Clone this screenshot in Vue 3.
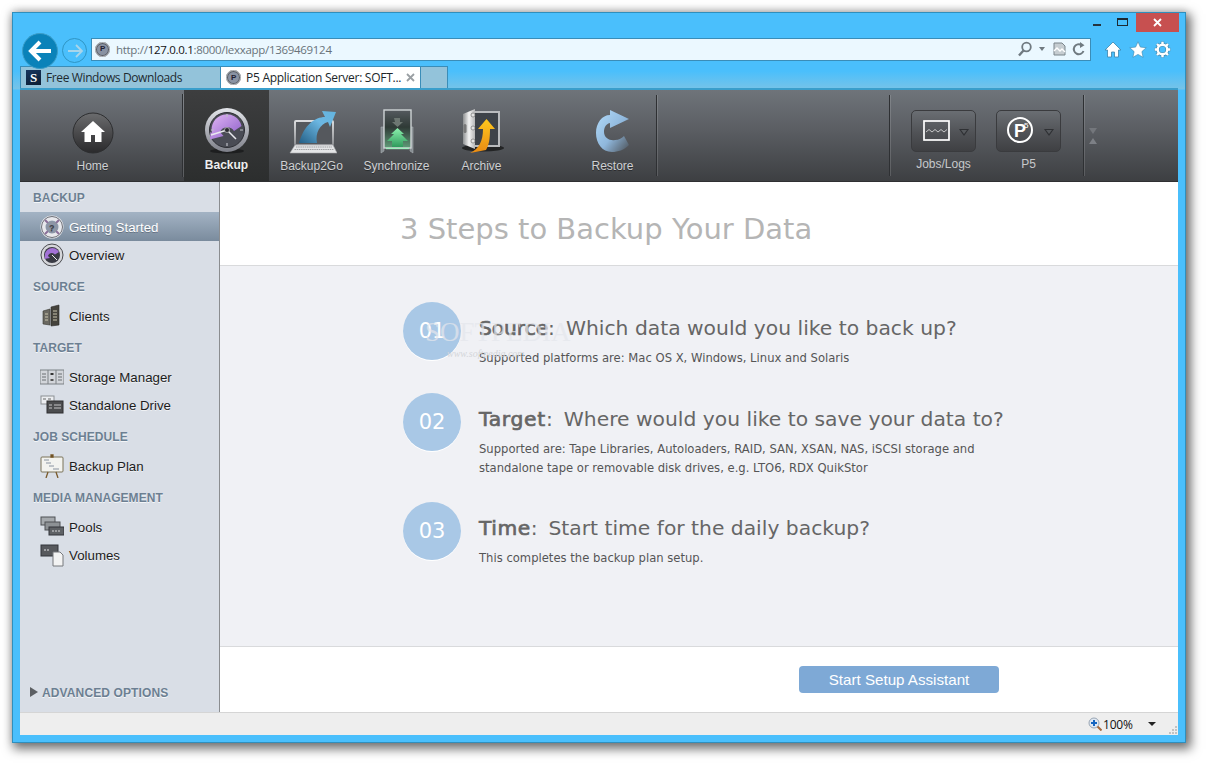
<script setup>
const sections = [
  { title: 'BACKUP', items: [
    { label: 'Getting Started', icon: 'help', active: true },
    { label: 'Overview', icon: 'clock' }
  ] },
  { title: 'SOURCE', items: [{ label: 'Clients', icon: 'clients' }] },
  { title: 'TARGET', items: [
    { label: 'Storage Manager', icon: 'storage' },
    { label: 'Standalone Drive', icon: 'drive' }
  ] },
  { title: 'JOB SCHEDULE', items: [{ label: 'Backup Plan', icon: 'plan' }] },
  { title: 'MEDIA MANAGEMENT', items: [
    { label: 'Pools', icon: 'pools' },
    { label: 'Volumes', icon: 'volumes' }
  ] }
]
const steps = [
  { n: '01', head: 'Source', track: -0.1, q: 'Which data would you like to back up?', lines: ['Supported platforms are: Mac OS X, Windows, Linux and Solaris'] },
  { n: '02', head: 'Target', track: 0.7, q: 'Where would you like to save your data to?', lines: ['Supported are: Tape Libraries, Autoloaders, RAID, SAN, XSAN, NAS, iSCSI storage and', 'standalone tape or removable disk drives, e.g. LTO6, RDX QuikStor'] },
  { n: '03', head: 'Time', track: 0.5, q: 'Start time for the daily backup?', lines: ['This completes the backup plan setup.'] }
]
</script>

<template>
  <div class="page">
    <div class="window">
      <div class="caption">
        <span class="min"></span>
        <span class="max"></span>
        <span class="close">
          <svg width="11" height="11" viewBox="0 0 11 11"><path d="M2 2l7 7M9 2l-7 7" stroke="#fff" stroke-width="1.8"/></svg>
        </span>
      </div>

      <div class="navrow">
        <div class="back">
          <svg width="26" height="24" viewBox="0 0 26 24"><path d="M13 3L4 12l9 9M4.500 12H24" fill="none" stroke="#fff" stroke-width="4"/></svg>
        </div>
        <div class="forward">
          <svg width="18" height="16" viewBox="0 0 18 16"><path d="M10 2l6 6-6 6M15.500 8H2" fill="none" stroke="#a9d5ea" stroke-width="1.800"/></svg>
        </div>
        <div class="address">
          <span class="p5fav small"><i>P</i></span>
          <span class="url">http://<b>127.0.0.1</b>:8000/lexxapp/1369469124</span>
          <span class="addr-tools">
            <svg width="16" height="16" viewBox="0 0 16 16"><circle cx="9.500" cy="6" r="4.300" fill="none" stroke="#707a80" stroke-width="1.800"/><path d="M6.500 9.500L2 14.500" stroke="#707a80" stroke-width="2.400"/></svg>
            <i class="addr-caret"></i>
            <svg class="compat" width="13" height="14" viewBox="0 0 13 14"><path d="M1 1h8l3 3v9H1z" fill="#c6cdd1" stroke="#7b858b"/><path d="M1 9l3-3 3 3 2-2 3 3" fill="none" stroke="#fff" stroke-width="1.400"/></svg>
            <svg width="14" height="14" viewBox="0 0 14 14"><path d="M11.500 9A5 5 0 1 1 9.500 3" fill="none" stroke="#707a80" stroke-width="2"/><path d="M8 0l4.500 3.200L8 6z" fill="#707a80"/></svg>
          </span>
        </div>
        <div class="ie-tools">
          <svg width="18" height="17" viewBox="0 0 18 17"><path d="M9 1L1 9h2.500v7h4v-5h3v5h4V9H17z" fill="#fff" stroke="#3b84ab" stroke-width=".8"/></svg>
          <svg width="18" height="17" viewBox="0 0 18 17"><path d="M9 .8l2.400 5.300 5.800.6-4.300 3.900 1.200 5.700L9 13.400l-5.100 2.900 1.200-5.700L.8 6.700l5.800-.6z" fill="#fff" stroke="#3b84ab" stroke-width=".6"/></svg>
          <svg width="17" height="17" viewBox="0 0 17 17"><path d="M8.500 .6v3M8.500 13.400v3M.6 8.500h3M13.400 8.500h3M2.900 2.900L5 5M12 12l2.100 2.100M14.100 2.900L12 5M5 12l-2.100 2.100" stroke="#3b84ab" stroke-width="3.600"/><circle cx="8.500" cy="8.500" r="4.800" fill="none" stroke="#3b84ab" stroke-width="3.600"/><circle cx="8.500" cy="8.500" r="4.800" fill="none" stroke="#fff" stroke-width="2.400"/><path d="M8.500 .8v3M8.500 13.200v3M.8 8.500h3M13.200 8.500h3M3 3l2 2M12 12l2 2M14 3l-2 2M5 12l-2 2" stroke="#fff" stroke-width="2.400"/></svg>
        </div>
      </div>

      <div class="tabs">
        <div class="tab inactive">
          <span class="s-fav">S</span>
          <span class="tab-text">Free Windows Downloads</span>
        </div>
        <div class="tab current">
          <span class="p5fav"><i>P</i></span>
          <span class="tab-text">P5 Application Server: SOFT...</span>
          <svg class="tab-x" width="9" height="9" viewBox="0 0 9 9"><path d="M1 1l7 7M8 1L1 8" stroke="#9a9fa3" stroke-width="1.800"/></svg>
        </div>
        <div class="tab newtab"></div>
      </div>

      <div class="app">
        <div class="toolbar">
          <div class="tool home-tool">
            <svg width="44" height="44" viewBox="0 0 44 44">
              <defs><linearGradient id="hg" x1="0" y1="0" x2="0" y2="1"><stop offset="0" stop-color="#6b6c6e"/><stop offset=".5" stop-color="#4a4a4c"/><stop offset="1" stop-color="#2a2a2c"/></linearGradient></defs>
              <circle cx="22" cy="22" r="20" fill="url(#hg)" stroke="#2d2e30" stroke-width="1"/>
              <path d="M22 10l-12 11h3.500v10H20v-7h4v7h6.500V21H34z" fill="#fff"/>
            </svg>
            <span>Home</span>
          </div>
          <i class="sep sep-home"></i>
          <div class="tool active-tool">
            <svg width="48" height="48" viewBox="0 0 48 48">
              <defs>
                <linearGradient id="cg" x1="0" y1="0" x2="0" y2="1"><stop offset="0" stop-color="#e3e5ea"/><stop offset="1" stop-color="#7d7f88"/></linearGradient>
                <linearGradient id="pg" x1="0" y1="0" x2="1" y2="1"><stop offset="0" stop-color="#e2b7f5"/><stop offset="1" stop-color="#8a5cc7"/></linearGradient>
              </defs>
              <ellipse cx="24" cy="44" rx="17" ry="2.500" fill="#1d1e1f"/>
              <circle cx="24" cy="23" r="22" fill="url(#cg)"/>
              <circle cx="24" cy="23" r="17.500" fill="#4a4c55" stroke="#2c2d33"/>
              <path d="M9 26A15 15 0 0 1 38.500 19L31 24A8 8 0 0 0 17 25l3.500 4L7 32.500 7.500 25z" fill="url(#pg)"/>
              <path d="M24 23L8 28M24 23l9 9" stroke="#e9e9ee" stroke-width="1.500"/>
              <circle cx="24" cy="23" r="2.500" fill="#2b2b30" stroke="#ddd" stroke-width=".6"/>
              <path d="M24 7v3M24 36v3M8 23h3M37 23h3" stroke="#bdbfc6" stroke-width="1.200"/>
            </svg>
            <span>Backup</span>
          </div>
          <div class="tool">
            <svg width="50" height="48" viewBox="0 0 50 48">
              <defs>
                <linearGradient id="ab" x1="0" y1="1" x2="1" y2="0"><stop offset="0" stop-color="#245f86"/><stop offset=".6" stop-color="#6cb7e2"/><stop offset="1" stop-color="#63b4df"/></linearGradient>
                <linearGradient id="lp" x1="0" y1="0" x2="0" y2="1"><stop offset="0" stop-color="#dadbdd"/><stop offset="1" stop-color="#8d8f93"/></linearGradient>
              </defs>
              <rect x="8" y="14" width="38" height="24" fill="#55585d" stroke="url(#lp)" stroke-width="2" rx="1"/>
              <path d="M3 46l5-8h38l4 8z" fill="#e4e5e7" stroke="#a7a9ac" stroke-width=".6"/>
              <path d="M9 40h36M7.500 42.500h39" stroke="#8e9093" stroke-width=".8" stroke-dasharray="1.500 .7"/>
              <path d="M12 36C17 18 28 10 38 10L35 4 49 5 43 20 41 15C33 17 28 26 30 36z" fill="url(#ab)"/>
            </svg>
            <span>Backup2Go</span>
          </div>
          <div class="tool">
            <svg width="44" height="48" viewBox="0 0 44 48">
              <defs>
                <linearGradient id="sy" x1="0" y1="0" x2="0" y2="1"><stop offset="0" stop-color="#555a5f"/><stop offset=".45" stop-color="#2f3a36"/><stop offset="1" stop-color="#5f9c78"/></linearGradient>
                <linearGradient id="ga" x1="0" y1="0" x2="0" y2="1"><stop offset="0" stop-color="#8cf2ae"/><stop offset="1" stop-color="#2f9a5c"/></linearGradient>
              </defs>
              <path d="M6 20v26l3-2V20zM38 20v26l-3-2V20z" fill="#858c90" stroke="#a9afb2" stroke-width=".6"/>
              <rect x="9" y="3" width="27" height="38" fill="url(#sy)" stroke="#cfd4d6" stroke-width="1.400"/>
              <path d="M19 11h6v4h3l-5.500 5-5.500-5h3z" fill="#6d7772"/>
              <path d="M22.500 21l6.500 6h-3l7 7h-5v6H17v-6h-5l7-7h-3z" fill="url(#ga)"/>
              <path d="M11 41.500h23" stroke="#9ef0bd" stroke-width="1.400"/>
            </svg>
            <span>Synchronize</span>
          </div>
          <div class="tool">
            <svg width="46" height="48" viewBox="0 0 46 48">
              <defs>
                <linearGradient id="sf" x1="0" y1="0" x2="1" y2="0"><stop offset="0" stop-color="#8d8f90"/><stop offset=".5" stop-color="#f4f4f4"/><stop offset="1" stop-color="#b5b6b7"/></linearGradient>
                <linearGradient id="or" x1="0" y1="0" x2="0" y2="1"><stop offset="0" stop-color="#ffc91e"/><stop offset="1" stop-color="#e98a13"/></linearGradient>
              </defs>
              <ellipse cx="24" cy="41" rx="21" ry="3.500" fill="#232425"/>
              <rect x="14" y="5" width="26" height="34" fill="#3e4349" stroke="#b9bbbd" stroke-width="2"/>
              <path d="M4 7l12-5v40L4 37z" fill="url(#sf)"/>
              <circle cx="14" cy="8" r="2" fill="#e3e3e3" stroke="#666" stroke-width=".6"/>
              <circle cx="14" cy="21" r="2" fill="#e3e3e3" stroke="#666" stroke-width=".6"/>
              <circle cx="14" cy="34" r="2" fill="#e3e3e3" stroke="#666" stroke-width=".6"/>
              <rect x="4.500" y="17" width="3" height="9" rx="1.500" fill="#777"/>
              <path d="M11 46C20 42 24 34 24 22h-5L27.500 12 36 22h-5C31 32 30 38 27 43z" fill="url(#or)"/>
            </svg>
            <span>Archive</span>
          </div>
          <div class="tool restore">
            <svg width="40" height="48" viewBox="0 0 40 48">
              <defs><linearGradient id="rs" x1="0" y1="0" x2="1" y2="1"><stop offset="0" stop-color="#b4dcfa"/><stop offset=".55" stop-color="#8fb7dc"/><stop offset="1" stop-color="#4c5157"/></linearGradient></defs>
              <path d="M17 8V3L36 12 17 21V16C12 17 11 22 11 25 11 31 17 34 22 33 26 33 29 31 31 29L36 38C31 43 25 45 19 45 9 45 3 36 3 26 3 16 9 8 17 8z" fill="url(#rs)"/>
            </svg>
            <span>Restore</span>
          </div>
          <i class="sep sep-restore"></i>
          <div class="spacer"></div>
          <i class="sep"></i>
          <div class="right-tools">
            <div class="rtool">
              <div class="rbtn">
                <svg width="28" height="22" viewBox="0 0 28 22"><rect x="1" y="1" width="25" height="19" fill="none" stroke="#fff" stroke-width="1.700"/><path d="M3 12l3-2.500 3 2.500 3-2.500 3 2.500 3-2.500 3 2.500 3-2.500" fill="none" stroke="#e4e4e4" stroke-width=".8"/></svg>
                <i class="caret"></i>
              </div>
              <span>Jobs/Logs</span>
            </div>
            <div class="rtool">
              <div class="rbtn">
                <svg class="p5-icon" width="28" height="28" viewBox="0 0 28 28"><circle cx="13" cy="13" r="12" fill="none" stroke="#fff" stroke-width="2"/><text x="7" y="19.500" class="p-big">P</text><text x="17" y="11" class="p-small">5</text></svg>
                <i class="caret"></i>
              </div>
              <span>P5</span>
            </div>
          </div>
          <i class="sep sep-last"></i>
          <div class="collapse">
            <i class="tri-down"></i>
            <i class="tri-up"></i>
          </div>
        </div>

        <div class="workspace">
          <aside class="sidebar">
            <div v-for="section in sections" :key="section.title" class="section">
              <h4>{{ section.title }}</h4>
              <div v-for="item in section.items" :key="item.label" class="item" :class="{ selected: item.active }">
                <span class="item-icon">
                  <svg v-if="item.icon === 'help'" width="24" height="24" viewBox="0 0 24 24"><circle cx="12" cy="12" r="9" fill="none" stroke="#e8e8ec" stroke-width="5"/><circle cx="12" cy="12" r="10.500" fill="none" stroke="#6d7078" stroke-width="1"/><path d="M5 5l4 4M19 5l-4 4M5 19l4-4M19 19l-4-4" stroke="#8b6f99" stroke-width="2"/><circle cx="12" cy="12" r="6" fill="#8d95a5"/><text x="9" y="16" class="q">?</text></svg>
                  <svg v-else-if="item.icon === 'clock'" width="24" height="24" viewBox="0 0 24 24"><circle cx="12" cy="12" r="11" fill="#d5d6da" stroke="#4b4c50"/><circle cx="12" cy="12" r="8" fill="#3a3b45"/><path d="M5 14A7.500 7.500 0 0 1 19 9l-4 2.500A4 4 0 0 0 8 13l2 2-6 1z" fill="#a372d6"/><path d="M12 12l5 5" stroke="#eee"/></svg>
                  <svg v-else-if="item.icon === 'clients'" width="24" height="24" viewBox="0 0 24 24"><path d="M3 7l7-2v16l-7-1z" fill="#6a6861" stroke="#36352f" stroke-width=".6"/><path d="M11 3l8-2v20l-8 1z" fill="#45433d" stroke="#2a2926" stroke-width=".6"/><path d="M5 10h3M5 13h3M5 16h3M13 7h4M13 10h4M13 13h4M13 16h4" stroke="#c9c6ae" stroke-width="1.200"/></svg>
                  <svg v-else-if="item.icon === 'storage'" width="24" height="24" viewBox="0 0 24 24"><rect y="5" width="24" height="14" fill="#d3d6db" stroke="#7d8185"/><path d="M8 5v14M16 5v14" stroke="#7d8185"/><path d="M2 9h4M2 12h4M2 15h4M18 9h4M18 12h4M18 15h4" stroke="#6b6f73"/><rect x="10.500" y="8" width="3" height="2" fill="#333"/><rect x="10.500" y="14" width="3" height="2" fill="#555"/></svg>
                  <svg v-else-if="item.icon === 'drive'" width="24" height="24" viewBox="0 0 24 24"><rect x="1" y="3" width="13" height="8" fill="#eceef1" stroke="#8c8f93"/><path d="M3 6h3M8 6h3" stroke="#666"/><rect x="7" y="8" width="16" height="12" fill="#4c4d4f" stroke="#2e2f30"/><path d="M9 12h3M9 15h3M14 12h7M14 15h7" stroke="#c6c7c9"/></svg>
                  <svg v-else-if="item.icon === 'plan'" width="24" height="24" viewBox="0 0 24 24"><rect x="1" y="3" width="22" height="15" rx="1" fill="#f3f3ef" stroke="#7a7358"/><path d="M4 6h5M6 9h5M9 12h5M13 15h6" stroke="#8a93a0"/><path d="M11 1h2v2h-2zM8 18l-2 6M16 18l2 6" stroke="#7a5a2a" stroke-width="1.300"/></svg>
                  <svg v-else-if="item.icon === 'pools'" width="24" height="24" viewBox="0 0 24 24"><rect x="1" y="2" width="14" height="8" fill="#a5a9ad" stroke="#4e5154"/><rect x="5" y="7" width="15" height="8" fill="#8d9195" stroke="#4e5154"/><rect x="9" y="12" width="15" height="8" fill="#5e6165" stroke="#33353a"/><path d="M12 16h9" stroke="#d7d8da" stroke-dasharray="2 1"/></svg>
                  <svg v-else width="24" height="24" viewBox="0 0 24 24"><rect x="1" y="2" width="17" height="11" fill="#57595d" stroke="#33353a"/><path d="M4 7h6" stroke="#e4e4e6" stroke-dasharray="2 1"/><path d="M13 9h7l3 3v11H13z" fill="#f3f3f3" stroke="#77797d"/></svg>
                </span>
                <span class="item-label">{{ item.label }}</span>
              </div>
            </div>
            <div class="advanced"><i></i><span>ADVANCED OPTIONS</span></div>
          </aside>

          <main class="main">
            <header class="main-head"><h1>3 Steps to Backup Your Data</h1></header>
            <section class="steps">
              <div v-for="step in steps" :key="step.n" class="step">
                <div class="num">{{ step.n }}</div>
                <div class="step-text">
                  <h2><b :style="{ letterSpacing: step.track + 'px' }">{{ step.head }}</b>:<span class="q-text">{{ step.q }}</span></h2>
                  <p v-for="line in step.lines" :key="line">{{ line }}</p>
                </div>
              </div>
              <div class="watermark">
                <span class="wm-big">SOFTPEDIA</span>
                <span class="wm-small">www.softpedia.com</span>
              </div>
            </section>
            <footer class="main-foot"><button class="start">Start Setup Assistant</button></footer>
          </main>
        </div>

        <div class="statusbar">
          <svg width="14" height="14" viewBox="0 0 14 14"><circle cx="6" cy="6" r="5" fill="#dfe8f3" stroke="#9aa6b4"/><path d="M6 3v6M3 6h6" stroke="#1565c0" stroke-width="2"/><path d="M9.500 9.500l4 4" stroke="#a5683a" stroke-width="2"/></svg>
          <span class="zoom">100%</span>
          <i class="status-caret"></i>
          <svg class="grip" width="9" height="9" viewBox="0 0 9 9"><path d="M7 1h2v2H7zM4 4h2v2H4zM7 4h2v2H7zM1 7h2v2H1zM4 7h2v2H4zM7 7h2v2H7z" fill="#c2c2c2"/></svg>
        </div>
      </div>
    </div>
  </div>
</template>

<style>
html, body { margin: 0; background: #fff; overflow: hidden; }
</style>

<style scoped>
.page {
  width: 1206px;
  height: 763px;
  padding: 12px 20px 20px 12px;
  box-sizing: border-box;
  background: #fff;
  font-family: "Liberation Sans", Arial, sans-serif;
}
.window {
  width: 1174px;
  height: 731px;
  box-sizing: border-box;
  border: 1px solid #2f8fbd;
  padding: 0 7px 7px;
  display: flex;
  flex-direction: column;
  background: linear-gradient(180deg, #4abffc 0, #4abffc 58px, #76c3e8 76px, #4abffc 77px);
  box-shadow: 3px 4px 10px 2px rgba(0, 0, 0, .55), 0 -2px 8px rgba(0, 0, 0, .12);
}
.caption {
  height: 19px;
  display: flex;
  justify-content: flex-end;
  align-items: flex-start;
  flex: none;
}
.min { width: 8px; height: 2px; margin: 11px 16px 0 0; background: #24343f; }
.max { width: 9px; height: 5px; margin: 5px 8px 0 0; border: 1px solid #1c2a33; border-top-width: 2px; }
.close {
  width: 43px;
  height: 19px;
  margin-right: -1px;
  background: #c75050;
  display: flex;
  align-items: center;
  justify-content: center;
}
.navrow {
  height: 34px;
  flex: none;
  display: flex;
  align-items: center;
  position: relative;
}
.back {
  width: 36px;
  height: 36px;
  margin: 3px 0 0 2px;
  border-radius: 50%;
  background: #0a82b9;
  border: 1px solid #3b9dc8;
  box-sizing: border-box;
  display: flex;
  align-items: center;
  justify-content: center;
  z-index: 1;
}
.forward {
  width: 25px;
  height: 25px;
  margin: 3px 0 0 4px;
  border-radius: 50%;
  border: 1px solid #2f95c4;
  box-sizing: border-box;
  display: flex;
  align-items: center;
  justify-content: center;
}
.address {
  width: 1000px;
  height: 23px;
  margin: 0 0 0 4px;
  box-sizing: border-box;
  background: #ebf8ff;
  border: 1px solid #3a8db8;
  display: flex;
  align-items: center;
  padding-left: 3px;
  font-family: "Open Sans", sans-serif;
  font-size: 11.500px;
  letter-spacing: -.3px;
  color: #69737a;
}
.url { margin-left: 6px; padding-top: 1px; }
.url b { color: #111; font-weight: 400; }
.addr-tools {
  margin-left: auto;
  display: flex;
  align-items: center;
  gap: 6px;
  padding-right: 4px;
}
.addr-tools svg { display: block; }
.addr-caret { width: 0; height: 0; border: 3.500px solid transparent; border-top: 4px solid #707a80; border-bottom: 0; margin-right: 2px; }
.ie-tools {
  display: flex;
  align-items: center;
  gap: 7px;
  margin-left: 13px;
}
.ie-tools svg { display: block; }
.tabs {
  height: 22px;
  flex: none;
  display: flex;
  align-items: stretch;
  font-family: "Open Sans", sans-serif;
  font-size: 12px;
  letter-spacing: -.27px;
}
.tab {
  display: flex;
  align-items: center;
  box-sizing: border-box;
  border: 1px solid #3a8db8;
  border-left-width: 0;
  border-bottom-width: 0;
  color: #1e2a30;
}
.tab.inactive {
  width: 201px;
  background: #93c3da;
  padding-left: 5px;
  border-left-width: 1px;
  letter-spacing: -.38px;
}
.tab.current {
  width: 200px;
  background: #fff;
  padding-left: 5px;
  color: #20262a;
}
.tab.newtab { width: 27px; background: #93c3da; }
.tab-text { margin-left: 5px; white-space: nowrap; }
.tab-x { margin-left: 5px; }
.s-fav {
  width: 15px;
  height: 15px;
  background: linear-gradient(160deg, #17365f, #0c1d33);
  color: #fff;
  font: 700 13px/15px "Liberation Serif", serif;
  text-align: center;
  flex: none;
}
.p5fav {
  width: 15px;
  height: 15px;
  border-radius: 50%;
  background: #8a93a3;
  border: 2px solid #5b6068;
  outline: 1px solid #c2c5c9;
  outline-offset: -1px;
  box-sizing: border-box;
  display: flex;
  align-items: center;
  justify-content: center;
  flex: none;
}
.p5fav i { font: 700 8px/1 "Liberation Sans", sans-serif; color: #223; }
.app {
  flex: 1;
  min-height: 0;
  display: flex;
  flex-direction: column;
  border-top: 2px solid #3a9ecb;
  background: #eee;
}
.toolbar {
  height: 92px;
  flex: none;
  display: flex;
  align-items: stretch;
  background: linear-gradient(180deg, #6f747a 0, #5a5d62 45%, #3d3f42 100%);
  border-bottom: 1px solid #2f3032;
  box-sizing: border-box;
}
.tool {
  width: 85px;
  flex: none;
  box-sizing: border-box;
  display: flex;
  flex-direction: column;
  align-items: center;
  justify-content: flex-end;
  padding-bottom: 8px;
  color: #cfd1d3;
  font-size: 12px;
  white-space: nowrap;
}
.tool svg { display: block; margin-bottom: 4px; }
.tool span { text-shadow: 0 1px 0 rgba(0,0,0,.4); }
.home-tool { margin-left: 30px; }
.active-tool {
  background: linear-gradient(180deg, #3d3e3f, #2c2e2e);
  color: #eee;
  font-weight: 700;
  font-size: 12px;
  padding-bottom: 9px;
}
.active-tool svg { margin-bottom: 3px; }
.restore { margin-left: 46px; }
.sep {
  width: 1px;
  flex: none;
  margin: 5px 0;
  background: #2e3033;
  box-shadow: 1px 0 0 rgba(255,255,255,.14);
}
.sep-home { margin: 4px 1px 4px 47px; }
.sep-restore { margin-left: 1px; }
.spacer { flex: 1; }
.right-tools { display: flex; margin-left: 11px; }
.rtool {
  width: 85px;
  display: flex;
  flex-direction: column;
  align-items: center;
  padding-top: 20px;
  color: #c6c8ca;
  font-size: 12px;
}
.rtool span { margin-top: 5px; }
.rbtn {
  width: 65px;
  height: 42px;
  box-sizing: border-box;
  border: 1px solid #3a3b3e;
  border-radius: 5px;
  background: linear-gradient(180deg, #6a6e73, #505256 55%, #3f4043);
  display: flex;
  align-items: center;
  padding-left: 11px;
  position: relative;
}
.rbtn svg { display: block; }
.rbtn .p5-icon { margin-left: -1px; }
.rbtn .p-big { font: 700 18px "Liberation Sans", sans-serif; fill: #fff; }
.rbtn .p-small { font: 400 8px "Liberation Sans", sans-serif; fill: #fff; }
.caret {
  position: absolute;
  right: 6px;
  top: 18px;
  width: 0;
  height: 0;
  border: 5px solid transparent;
  border-top: 7px solid #2f3134;
  border-bottom: 0;
}
.caret::after {
  content: "";
  position: absolute;
  left: -3px;
  top: -6px;
  width: 0;
  height: 0;
  border: 3px solid transparent;
  border-top: 4px solid #56595d;
  border-bottom: 0;
}
.sep-last { margin-left: 12px; }
.collapse {
  width: 94px;
  flex: none;
  box-sizing: border-box;
  display: flex;
  flex-direction: column;
  align-items: flex-start;
  gap: 4px;
  padding: 38px 0 0 5px;
}
.tri-down, .tri-up { width: 0; height: 0; border-left: 4px solid transparent; border-right: 4px solid transparent; }
.tri-down { border-top: 6px solid #74777c; }
.tri-up { border-bottom: 6px solid #7d8086; }
.workspace { flex: 1; min-height: 0; display: flex; }
.sidebar {
  width: 200px;
  flex: none;
  box-sizing: border-box;
  background: #d9dee6;
  border-right: 1px solid #8b8d90;
  display: flex;
  flex-direction: column;
}
.section { margin-bottom: 2px; }
.section h4 {
  margin: 0;
  height: 30px;
  line-height: 32px;
  padding-left: 13px;
  font-size: 12px;
  font-weight: 700;
  letter-spacing: .06px;
  color: #6c7f92;
  text-shadow: 0 1px 0 #f4f6f8;
}
.item {
  height: 28px;
  margin-top: 1px;
  display: flex;
  align-items: center;
  color: #1c1c1c;
  font-size: 13.300px;
  text-shadow: 0 1px 0 rgba(255,255,255,.6);
}
.item + .item { margin-top: 0; }
.item.selected {
  background: linear-gradient(180deg, #a2b2c3, #7a8b9d);
  box-shadow: 0 -1px 0 #a2b2c3;
  color: #fff;
  text-shadow: 0 1px 0 rgba(0,0,0,.25);
}
.item-icon { width: 24px; margin: 0 5px 0 20px; display: flex; }
.item-icon svg { display: block; }
.item-icon .q { font: 700 9px "Liberation Sans", sans-serif; fill: #3d3f49; }
.advanced {
  margin-top: auto;
  height: 41px;
  display: flex;
  align-items: flex-start;
  padding: 15px 0 0 10px;
  box-sizing: border-box;
  font-size: 12px;
  font-weight: 700;
  letter-spacing: .12px;
  color: #6c7f92;
  text-shadow: 0 1px 0 #f4f6f8;
}
.advanced i {
  width: 0;
  height: 0;
  margin: 1px 4px 0 0;
  border-top: 5px solid transparent;
  border-bottom: 5px solid transparent;
  border-left: 8px solid #5c5f63;
}
.main { flex: 1; display: flex; flex-direction: column; min-width: 0; font-family: "DejaVu Sans", sans-serif; background: #fff; }
.main-head {
  height: 84px;
  box-sizing: border-box;
  flex: none;
  padding: 29px 0 0 180px;
  border-bottom: 1px solid #d9dadc;
}
.main-head h1 {
  margin: 0;
  font-size: 29px;
  font-weight: 400;
  line-height: 36px;
  color: #b5b5b5;
  white-space: nowrap;
}
.steps {
  flex: 1;
  min-height: 0;
  box-sizing: border-box;
  background: #f0f1f5;
  padding: 36px 0 0 183px;
  position: relative;
  border-bottom: 1px solid #d9dadc;
}
.step { display: flex; height: 58px; margin-bottom: 33px; }
.step:nth-child(2) { margin-bottom: 51px; }
.num {
  width: 58px;
  height: 58px;
  flex: none;
  border-radius: 50%;
  background: #a9c8e6;
  color: #fff;
  font-size: 21px;
  line-height: 58px;
  text-align: center;
  box-shadow: 0 1px 0 #fff;
}
.step-text { margin-left: 18px; }
.step-text h2 {
  margin: 12px 0 0;
  font-size: 20.300px;
  font-weight: 400;
  line-height: 28px;
  color: #666;
  white-space: nowrap;
}
.step-text h2 b { font-weight: 400; -webkit-text-stroke: .7px #666; }
.q-text { margin-left: 11px; }
.step-text p {
  margin: 0;
  font-size: 11.600px;
  line-height: 19px;
  color: #555;
  white-space: nowrap;
}
.step-text h2 + p { margin-top: 7px; }
.watermark {
  position: absolute;
  left: 205px;
  top: 52px;
  display: flex;
  flex-direction: column;
  align-items: flex-start;
  pointer-events: none;
}
.wm-big { font: 400 27px/28px "Liberation Serif", serif; color: rgba(228, 230, 236, .72); }
.wm-small { font: italic 10px/12px "Liberation Serif", serif; color: #d4d6da; margin: 2px 0 0 22px; }
.main-foot {
  height: 65px;
  box-sizing: border-box;
  flex: none;
  padding: 19px 0 0 579px;
  background: #fff;
}
.start {
  width: 200px;
  height: 27px;
  border: 0;
  border-radius: 4px;
  padding: 0;
  background: #7ea9d6;
  color: #fff;
  font: 400 15.150px "Liberation Sans", sans-serif;
}
.statusbar {
  height: 23px;
  flex: none;
  box-sizing: border-box;
  border-top: 1px solid #d5d5d5;
  background: #eeeeee;
  display: flex;
  align-items: center;
  justify-content: flex-end;
  font-family: "Open Sans", sans-serif;
  font-size: 12px;
  letter-spacing: -.2px;
  color: #111;
  position: relative;
}
.statusbar > svg:first-child { margin-right: 1px; }
.zoom { width: 31px; }
.status-caret { width: 0; height: 0; margin: 0 22px 0 14px; border: 4px solid transparent; border-top: 4px solid #222; border-bottom: 0; }
.grip { position: absolute; right: 1px; bottom: 1px; }
</style>
